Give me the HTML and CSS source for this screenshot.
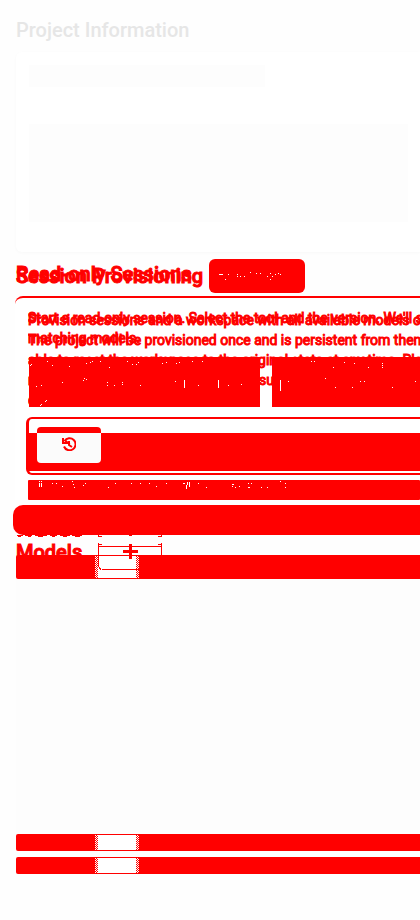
FILE: index.html
```html
<!DOCTYPE html>
<html lang="en">
<head>
<meta charset="utf-8">
<meta name="viewport" content="width=device-width, initial-scale=1">
<title>Project overview comparison</title>
<link rel="stylesheet" href="styles.css">
</head>
<body>
<main class="page">
  <h1 class="title faint">Project Information</h1>
  <section class="card info">
    <div class="ghost ghost-short"></div>
    <div class="ghost ghost-tall"></div>
  </section>

  <header class="session-head">
    <div class="stack headings">
      <h2 class="title title-old">Read-only Sessions</h2>
      <h2 class="title">Session Provisioning</h2>
    </div>
    <svg class="badge" viewBox="0 0 96 34" aria-hidden="true">
      <rect width="96" height="34" rx="6" fill="#f00"/>
      <path fill="#fff" shape-rendering="crispEdges" d="M10 15h4v1h-4zM16 20h1v1h-1zM19 15h1v1h-1zM28 15h1v1h-1zM28 17h1v1h-1zM31 17h1v1h-1zM35 17h1v1h-1zM41 13h1v1h-1zM47 14h1v1h-1zM51 14h1v1h-1zM58 17h1v1h-1zM61 14h1v1h-1zM61 20h1v1h-1zM63 17h1v1h-1zM66 15h1v1h-1zM69 14h1v1h-1zM71 15h1v1h-1z"/>
    </svg>
  </header>

  <section class="session">
    <div class="stack copy">
      <p class="copy-old">Start a read-only session. Select the tool and the version. We'll search<br>matching models.</p>
      <p class="copy-new">Provision sessions and a workspace with all available models of<br>The project will be provisioned once and is persistent from then<br>able to reset the workspace to the original state at any time. Please<br>note that your provisioned session is supported for all models<br>only.</p>
      <div class="fields"><i class="field"></i><i class="field"></i></div>
      <svg class="specks" width="100%" height="50" aria-hidden="true"><path fill="#fff" shape-rendering="crispEdges" d="M3 4h1v1h-1zM2 5h1v1h-1zM19 1h1v1h-1zM24 5h1v1h-1zM41 6h1v1h-1zM58 3h1v1h-1zM62 2h1v1h-1zM64 1h1v1h-1zM72 1h1v1h-1zM81 7h1v1h-1zM99 1h1v1h-1zM104 4h1v1h-1zM108 4h1v1h-1zM110 2h1v1h-1zM134 3h1v1h-1zM138 2h1v1h-1zM148 3h1v1h-1zM151 2h1v1h-1zM164 1h1v1h-1zM174 1h1v1h-1zM56 18h1v1h-1zM55 20h1v1h-1zM58 19h1v1h-1zM34 22h1v1h-1zM8 26h1v1h-1zM13 25h1v1h-1zM79 22h1v1h-1zM79 25h1v1h-1zM86 25h1v1h-1zM94 22h1v1h-1zM94 24h1v1h-1zM112 25h1v1h-1zM147 21h1v1h-1zM156 20h1v8h-1zM170 25h1v1h-1zM190 20h1v8h-1zM200 25h1v1h-1zM213 24h1v1h-1zM17 41h1v1h-1zM12 45h1v1h-1zM13 44h1v1h-1zM18 40h1v1h-1zM252 20h1v11h-1zM260 21h1v1h-1zM297 18h1v1h-1zM307 27h1v1h-1zM324 27h1v1h-1zM332 21h1v1h-1zM336 21h1v1h-1zM364 27h1v1h-1zM387 21h1v1h-1zM283 1h1v1h-1zM286 1h1v1h-1zM305 7h1v1h-1zM316 2h1v1h-1zM326 3h1v1h-1zM340 7h1v1h-1zM354 3h1v1h-1zM354 5h1v1h-1zM354 7h1v1h-1z"/></svg>
    </div>
    <div class="panel">
      <div class="panel-fill">
        <button class="history" type="button" aria-label="History">
          <svg viewBox="0 0 14 14" width="14" height="14" aria-hidden="true"><path d="M2.500 4A6 6 0 1 1 2 9.500M1 1v5h5L2.500 3M7 4v4l3 2" fill="none" stroke="#f00" stroke-width="2"/></svg>
        </button>
      </div>
    </div>
    <svg class="note" width="100%" height="20" aria-hidden="true"><rect width="100%" height="20" rx="1" fill="#f00"/><path fill="#fff" shape-rendering="crispEdges" d="M11 1h1v1h-1zM11 3h1v4h-1zM13 1h1v1h-1zM13 3h1v4h-1zM24 3h1v1h-1zM28 3h1v1h-1zM34 6h1v1h-1zM44 1h1v1h-1zM45 4h1v1h-1zM46 7h1v1h-1zM55 5h1v1h-1zM57 3h1v1h-1zM80 7h1v1h-1zM87 3h1v1h-1zM103 3h1v1h-1zM112 3h1v1h-1zM121 3h1v1h-1zM128 6h1v1h-1zM138 3h1v1h-1zM155 3h2v1h-2zM158 5h1v4h-1zM159 2h1v3h-1zM161 2h1v5h-1zM170 3h1v1h-1zM178 7h1v1h-1zM204 4h2v1h-2zM204 6h1v1h-1zM207 7h1v1h-1zM211 6h1v1h-1zM220 3h1v1h-1zM223 3h1v1h-1zM220 7h2v1h-2zM233 7h1v1h-1zM239 7h1v1h-1zM252 1h1v1h-1zM257 3h1v1h-1zM257 7h1v1h-1z"/></svg>
  </section>
  <div class="divider"></div>

  <header class="models-head">
    <h2 class="title">Models</h2>
    <button class="add" type="button" aria-label="Add model">
      <svg viewBox="0 0 64 36" width="64" height="36" aria-hidden="true"><g shape-rendering="crispEdges"><path d="M.5 0v2M63.500 0v2M1 1.500h3M60 1.500h3M31 .5h3M.5 8v24M3.500 34.500h60M63.500 8v18M1 11.500h63M1 9.500h3M60 9.500h3M1.500 32v2M2.500 33v2" fill="none" stroke="#f00"/><path d="M32.500 9v15M25 16.500h15" stroke="#f00" stroke-width="3"/></g></svg>
    </button>
    <svg class="edge" viewBox="0 0 68 2" width="68" height="2" aria-hidden="true"><path d="M1 .5h6M9 .5h7M19 .5h12M34 .5h7M44 .5h10M56 .5h10M2 1.500h3M12 1.500h3M22 1.500h5M36 1.500h3M47 1.500h4M59 1.500h5" stroke="#f00" shape-rendering="crispEdges"/></svg>
  </header>
  <div class="row row-large"><i class="slot"></i></div>
  <div class="blank"></div>
  <div class="row"><i class="slot"></i></div>
  <div class="row"><i class="slot"></i></div>
</main>
</body>
</html>
```
FILE: styles.css
```css
* { box-sizing: border-box; }
body { margin: 0; background: #fefefe; color: #f00; font-family: Roboto, "Liberation Sans", sans-serif; overflow-x: hidden; }
h1, h2, p { margin: 0; }
.page { min-height: 100vh; padding: 16px 0 0 16px; }
.title { font-size: 20px; line-height: 28px; font-weight: 500; white-space: nowrap; }
.faint { color: #e6e6e6; }
.card { background: #fff; }
.info { height: 200px; margin-top: 8px; padding: 13px 12px 0 13px; border-radius: 6px 0 0 6px; box-shadow: 0 1px 3px #f8f8f8; }
.ghost { background: #fdfdfd; }
.ghost-short { width: 236px; max-width: 100%; height: 22px; }
.ghost-tall { height: 98px; margin-top: 37px; }
.stack { display: grid; }
.stack > * { grid-area: 1 / 1; }
.session-head { display: flex; align-items: center; gap: 6px; height: 34px; margin-top: 7px; }
.session-head .title { -webkit-text-stroke: 1px #f00; }
.headings .title-old { padding-bottom: 4px; line-height: 24px; }
.badge { width: 96px; height: 34px; flex: none; }
.session { margin: 3px 0 0 -1px; padding: 10px 0 0 13px; border-top: 2px solid #f00; border-radius: 8px 0 0 0; background: #fff; }
.copy { font-size: 14px; line-height: 20px; white-space: nowrap; overflow: hidden; -webkit-text-stroke: 1px #f00; height: 99px; grid-template-columns: 100%; }
.copy-new { padding-top: 2px; }
.fields { display: grid; grid-template-columns: 231px 1fr; gap: 12px; padding: 49px 0 0 1px; }
.field { background: #f00; border-radius: 0 0 2px 2px; }
.specks { align-self: end; display: block; }
.panel { margin: 10px 0 0 -2px; height: 58px; border: 2px solid #f00; border-right: 0; border-left-width: 3px; border-radius: 6px 0 0 6px; padding: 8px 0 2px; }
.panel-fill { height: 44px; background: linear-gradient(#f00, #f00) bottom / 100% 38px no-repeat; padding-left: 8px; }
.history { display: flex; justify-content: center; width: 64px; height: 36px; padding: 4px 0 0; border: 0; border-top: 6px solid #f00; border-radius: 4px; background: #fbfbfb; }
.history svg { display: block; }
.note { display: block; margin-top: 5px; }
.divider { height: 30px; margin: 5px 0 0 -3px; background: #f00; border-radius: 10px 0 0 10px; }
.models-head { position: relative; display: flex; gap: 16px; height: 20px; }
.models-head .title { line-height: 34px; -webkit-text-stroke: 1px #f00; }
.edge { position: absolute; top: 0; left: 0; }
.add { position: relative; z-index: 1; padding: 0; border: 0; background: none; height: 36px; }
.add svg { display: block; }
.row { height: 17px; margin-bottom: 6px; padding: 1px 0 1px 79px; background: #f00; border-radius: 2px 0 0 2px; position: relative; }
.row-large { height: 24px; margin-bottom: 0; position: static; }
.slot { display: block; width: 44px; height: 100%; background: linear-gradient(#fff, #fff) center / 38px 100% no-repeat, repeating-conic-gradient(#f00 0 25%, #fff 0 50%) 0 0 / 2px 2px; }
.blank { height: 255px; background: #fdfdfd; }
```
